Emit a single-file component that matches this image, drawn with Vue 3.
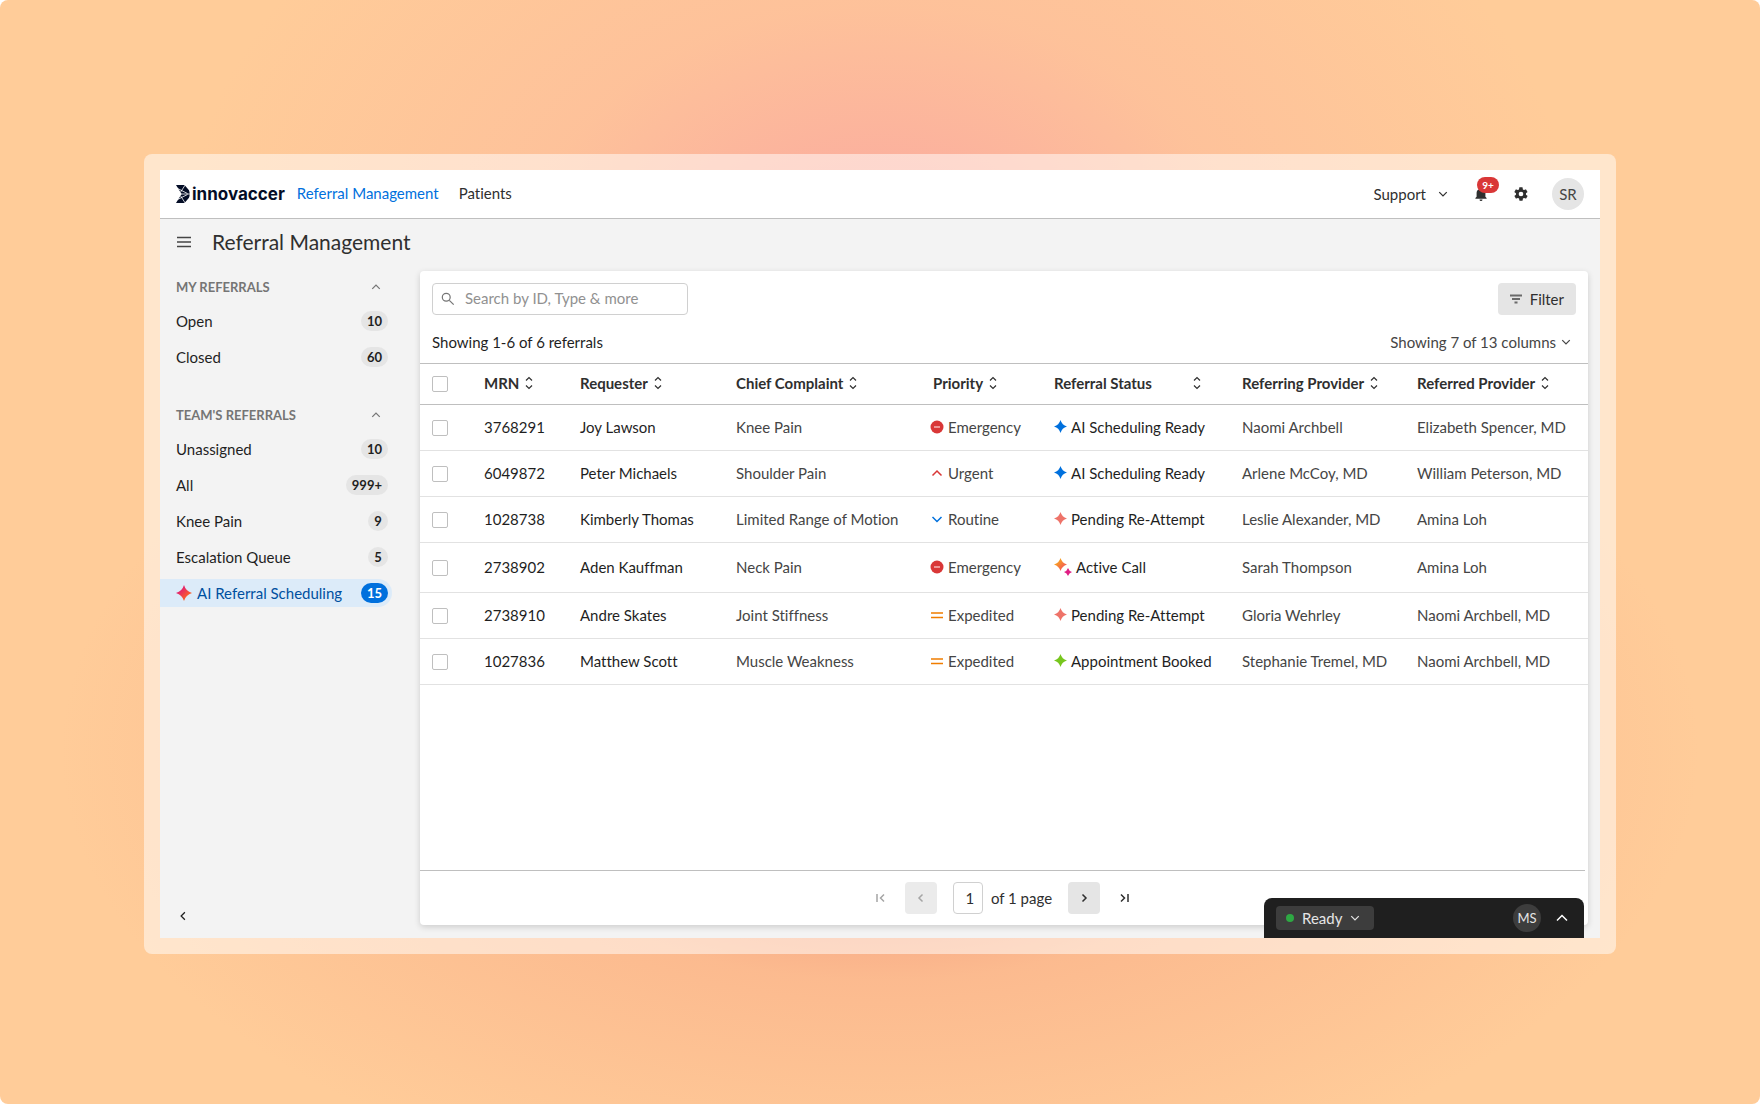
<template>
  <div class="page">
    <div class="frame">
      <div class="window">
        <header class="topbar">
          <a href="#" class="brand" aria-label="innovaccer">
            <svg class="brand-mark" viewBox="0 0 14 18" aria-hidden="true">
              <path d="M0 0h8.500L13 5.200Q14.400 9 13 12.800L8.500 18H0l5.600-9z" />
              <path class="cut" d="M9.200 0L4.400 7.400M9.200 18L4.400 10.600M4 9h10M1 3.200l10.500 5.300M1 14.800l10.500-5.300" />
            </svg>
            <span>innovaccer</span>
          </a>
          <nav class="topnav">
            <a href="#" class="current">Referral Management</a>
            <a href="#">Patients</a>
          </nav>
          <div class="topbar-actions">
            <button class="support">
              Support
              <svg class="chevron" viewBox="0 0 8 8"><path d="M1 2.500l3 3 3-3" /></svg>
            </button>
            <button class="bell" aria-label="Notifications">
              <svg viewBox="0 0 16 16">
                <path d="M8 1.500a1 1 0 0 0-1 1v.4A4 4 0 0 0 3.600 6.800v4L2.400 12v.8h11.200V12l-1.200-1.200v-4A4 4 0 0 0 9 2.900v-.4a1 1 0 0 0-1-1zM6.500 13.500a1.500 1.500 0 0 0 3 0z" />
              </svg>
              <span class="bell-count">9+</span>
            </button>
            <button class="gear" aria-label="Settings">
              <svg viewBox="0 0 24 24">
                <path d="M19.400 13c0-.3.100-.6.100-1s0-.7-.1-1l2.100-1.600c.2-.2.200-.4.100-.6l-2-3.500c-.1-.2-.4-.3-.6-.2l-2.500 1c-.5-.4-1.100-.7-1.700-1l-.4-2.600c0-.2-.2-.5-.5-.5h-4c-.3 0-.5.200-.5.500L9 5.100c-.6.300-1.200.6-1.700 1l-2.500-1c-.2-.1-.5 0-.6.200l-2 3.500c-.1.200-.1.500.1.600L4.500 11c0 .3-.1.600-.1 1s0 .7.100 1l-2.100 1.600c-.2.200-.2.400-.1.600l2 3.500c.1.200.4.300.6.200l2.500-1c.5.400 1.100.7 1.700 1l.4 2.600c0 .3.200.5.500.5h4c.3 0 .5-.2.500-.5l.4-2.600c.6-.3 1.200-.6 1.700-1l2.500 1c.2.100.5 0 .6-.2l2-3.500c.1-.2.100-.5-.1-.6zM12 15.500a3.500 3.500 0 1 1 0-7 3.500 3.500 0 0 1 0 7z" />
              </svg>
            </button>
            <button class="avatar">SR</button>
          </div>
        </header>

        <div class="title-row">
          <button class="menu-btn" aria-label="Menu">
            <svg viewBox="0 0 16 16"><path d="M1 3.500h14M1 8h14M1 12.500h14" /></svg>
          </button>
          <h1>Referral Management</h1>
        </div>

        <div class="body">
          <aside class="sidebar">
            <section v-for="group in groups" :key="group.title" class="side-group">
              <button class="side-heading">
                {{ group.title }}
                <svg class="chevron" viewBox="0 0 8 8"><path d="M1 5.500l3-3 3 3" /></svg>
              </button>
              <a
                v-for="item in group.items"
                :key="item.label"
                href="#"
                class="side-item"
                :class="{ active: item.active }"
              >
                <svg v-if="item.active" class="side-star" viewBox="0 0 16 16">
                  <defs>
                    <linearGradient id="side-star-fill" x1="0" y1="0" x2="1" y2="1">
                      <stop offset="0.3" stop-color="#e3256b" />
                      <stop offset="0.8" stop-color="#ff6a1f" />
                    </linearGradient>
                  </defs>
                  <path :d="starPath" fill="url(#side-star-fill)" />
                </svg>
                <span class="side-label">{{ item.label }}</span>
                <span class="pill">{{ item.count }}</span>
              </a>
            </section>
            <button class="collapse" aria-label="Collapse sidebar">
              <svg class="chevron" viewBox="0 0 8 8"><path d="M5.500 1l-3 3 3 3" /></svg>
            </button>
          </aside>

          <main class="panel">
            <div class="toolbar">
              <label class="search">
                <svg viewBox="0 0 16 16"><circle cx="6" cy="6" r="4.500" /><path d="M9.500 9.500l5 5" /></svg>
                <input v-model="query" type="text" placeholder="Search by ID, Type &amp; more" aria-label="Search referrals" />
              </label>
              <button class="filter">
                <svg viewBox="0 0 12 10"><path d="M0 1.500h12M2 5h8M4.500 8.500h3" /></svg>
                Filter
              </button>
            </div>
            <div class="summary">
              <span class="summary-count">Showing 1-6 of 6 referrals</span>
              <button class="columns">
                Showing 7 of 13 columns
                <svg class="chevron" viewBox="0 0 8 8"><path d="M1 2.500l3 3 3-3" /></svg>
              </button>
            </div>

            <table>
              <colgroup>
                <col class="c-check" />
                <col class="c-mrn" />
                <col class="c-requester" />
                <col class="c-complaint" />
                <col class="c-priority" />
                <col class="c-status" />
                <col class="c-referring" />
                <col class="c-referred" />
              </colgroup>
              <thead>
                <tr>
                  <th class="check"><input type="checkbox" aria-label="Select all" /></th>
                  <th v-for="col in columns" :key="col.label" :class="col.cls">
                    <button class="sort">
                      {{ col.label }}
                      <svg viewBox="0 0 8 14"><path d="M1 4.500l3-3 3 3M1 9.500l3 3 3-3" /></svg>
                    </button>
                  </th>
                </tr>
              </thead>
              <tbody>
                <tr v-for="row in rows" :key="row.mrn" :class="{ tall: row.status === 'Active Call' }">
                  <td class="check"><input type="checkbox" :aria-label="'Select ' + row.mrn" /></td>
                  <td class="strong">{{ row.mrn }}</td>
                  <td class="strong">{{ row.requester }}</td>
                  <td>{{ row.complaint }}</td>
                  <td>
                    <span class="with-icon">
                      <svg v-if="row.priority === 'Emergency'" class="p-icon" viewBox="0 0 14 14">
                        <circle cx="7" cy="7" r="6.500" fill="#d93737" />
                        <path d="M4 7h6" stroke="#f3b7b7" stroke-width="1.500" />
                      </svg>
                      <svg v-else-if="row.priority === 'Urgent'" class="p-icon line" viewBox="0 0 14 14">
                        <path d="M2.500 9.500L7 5l4.500 4.500" stroke="#d93737" />
                      </svg>
                      <svg v-else-if="row.priority === 'Routine'" class="p-icon line" viewBox="0 0 14 14">
                        <path d="M2.500 5L7 9.500 11.500 5" stroke="#0070dd" />
                      </svg>
                      <svg v-else class="p-icon line" viewBox="0 0 14 14">
                        <path d="M1 5h12M1 9.500h12" stroke="#f07d00" />
                      </svg>
                      {{ row.priority }}
                    </span>
                  </td>
                  <td class="strong">
                    <span class="with-icon">
                      <svg v-if="row.status === 'Active Call'" class="call-icon" viewBox="0 0 18 18">
                        <defs>
                          <linearGradient id="call-fill" x1="0" y1="0" x2="1" y2="1">
                            <stop offset="0.200" stop-color="#f7a81b" />
                            <stop offset="0.800" stop-color="#f4565a" />
                          </linearGradient>
                        </defs>
                        <path d="M6.500 0Q8 5 13 6.500 8 8 6.500 13 5 8 0 6.500 5 5 6.500 0z" fill="url(#call-fill)" />
                        <path d="M14 10Q15 13 18 14 15 15 14 18 13 15 10 14 13 13 14 10z" fill="#e01e84" />
                      </svg>
                      <svg v-else class="s-icon" :class="statusClass[row.status]" viewBox="0 0 16 16">
                        <path :d="starPath" />
                      </svg>
                      {{ row.status }}
                    </span>
                  </td>
                  <td>{{ row.referring }}</td>
                  <td>{{ row.referred }}</td>
                </tr>
              </tbody>
            </table>

            <footer class="pager">
              <button class="pg muted" aria-label="First page">
                <svg viewBox="0 0 10 10"><path d="M1 1v8M8 1.500L4.500 5 8 8.500" /></svg>
              </button>
              <button class="pg boxed muted" aria-label="Previous page">
                <svg viewBox="0 0 10 10"><path d="M6.500 1.500L3 5l3.500 3.500" /></svg>
              </button>
              <label class="page-of">
                <input v-model="page" type="text" />
                of 1 page
              </label>
              <button class="pg boxed" aria-label="Next page">
                <svg viewBox="0 0 10 10"><path d="M3.500 1.500L7 5 3.500 8.500" /></svg>
              </button>
              <button class="pg" aria-label="Last page">
                <svg viewBox="0 0 10 10"><path d="M9 1v8M2 1.500L5.500 5 2 8.500" /></svg>
              </button>
            </footer>
          </main>
        </div>

        <div class="dock">
          <button class="ready">
            <span class="dot"></span>
            Ready
            <svg class="chevron" viewBox="0 0 8 8"><path d="M1 2.500l3 3 3-3" /></svg>
          </button>
          <span class="dock-avatar">MS</span>
          <button class="dock-toggle" aria-label="Expand">
            <svg viewBox="0 0 12 12"><path d="M1 8.500l5-5 5 5" /></svg>
          </button>
        </div>
      </div>
    </div>
  </div>
</template>

<script setup>
import { ref } from 'vue'

const query = ref('')
const page = ref('1')

const starPath = 'M8 0Q9.800 6.200 16 8 9.800 9.800 8 16 6.200 9.800 0 8 6.200 6.200 8 0z'

const groups = [
  {
    title: 'MY REFERRALS',
    items: [
      { label: 'Open', count: '10' },
      { label: 'Closed', count: '60' },
    ],
  },
  {
    title: "TEAM'S REFERRALS",
    items: [
      { label: 'Unassigned', count: '10' },
      { label: 'All', count: '999+' },
      { label: 'Knee Pain', count: '9' },
      { label: 'Escalation Queue', count: '5' },
      { label: 'AI Referral Scheduling', count: '15', active: true },
    ],
  },
]

const columns = [
  { label: 'MRN' },
  { label: 'Requester' },
  { label: 'Chief Complaint' },
  { label: 'Priority', cls: 'indent' },
  { label: 'Referral Status', cls: 'wide' },
  { label: 'Referring Provider' },
  { label: 'Referred Provider' },
]

const statusClass = {
  'AI Scheduling Ready': 'blue',
  'Pending Re-Attempt': 'coral',
  'Appointment Booked': 'green',
}

const rows = [
  { mrn: '3768291', requester: 'Joy Lawson', complaint: 'Knee Pain', priority: 'Emergency', status: 'AI Scheduling Ready', referring: 'Naomi Archbell', referred: 'Elizabeth Spencer, MD' },
  { mrn: '6049872', requester: 'Peter Michaels', complaint: 'Shoulder Pain', priority: 'Urgent', status: 'AI Scheduling Ready', referring: 'Arlene McCoy, MD', referred: 'William Peterson, MD' },
  { mrn: '1028738', requester: 'Kimberly Thomas', complaint: 'Limited Range of Motion', priority: 'Routine', status: 'Pending Re-Attempt', referring: 'Leslie Alexander, MD', referred: 'Amina Loh' },
  { mrn: '2738902', requester: 'Aden Kauffman', complaint: 'Neck Pain', priority: 'Emergency', status: 'Active Call', referring: 'Sarah Thompson', referred: 'Amina Loh' },
  { mrn: '2738910', requester: 'Andre Skates', complaint: 'Joint Stiffness', priority: 'Expedited', status: 'Pending Re-Attempt', referring: 'Gloria Wehrley', referred: 'Naomi Archbell, MD' },
  { mrn: '1027836', requester: 'Matthew Scott', complaint: 'Muscle Weakness', priority: 'Expedited', status: 'Appointment Booked', referring: 'Stephanie Tremel, MD', referred: 'Naomi Archbell, MD' },
]
</script>

<style>
body {
  margin: 0;
  background: #fff;
}
</style>

<style scoped>
.page,
.page * {
  box-sizing: border-box;
}
.page {
  min-height: 100vh;
  display: flex;
  padding: 154px 144px 150px;
  border-radius: 8px;
  background:
    radial-gradient(ellipse 700px 520px at 50% 24%, rgba(248, 150, 162, 0.7), rgba(251, 174, 156, 0.35) 50%, rgba(255, 204, 153, 0)),
    radial-gradient(ellipse 820px 460px at 50% 68%, rgba(232, 116, 104, 0.85), rgba(247, 160, 128, 0.4) 50%, rgba(255, 204, 153, 0)),
    #ffcc99;
  font-family: Lato, 'Nunito Sans', sans-serif;
  font-size: 15px;
  line-height: 20px;
  font-variant-ligatures: none;
  color: #2f2f2f;
}
button,
input {
  font: inherit;
  color: inherit;
}
button {
  padding: 0;
  border: 0;
  background: none;
  cursor: pointer;
}
a {
  color: inherit;
  text-decoration: none;
}
svg {
  flex: none;
}

.frame {
  flex: 1;
  display: flex;
  padding: 16px;
  border-radius: 8px;
  background: rgba(255, 255, 255, 0.5);
}
.window {
  position: relative;
  flex: 1;
  display: flex;
  flex-direction: column;
  background: #f3f3f3;
}
.chevron {
  width: 10px;
  height: 10px;
  fill: none;
  stroke: currentColor;
}

/* Barra superior */
.topbar {
  display: flex;
  align-items: center;
  height: 49px;
  padding: 0 16px;
  background: #fff;
  border-bottom: 1px solid #bfbfbf;
}
.brand {
  display: flex;
  align-items: center;
  gap: 2px;
  font-family: Inter, sans-serif;
  font-size: 17px;
  font-weight: 700;
  color: #040d26;
}
.brand-mark {
  width: 14px;
  height: 18px;
  fill: #040d26;
}
.cut {
  fill: none;
  stroke: #fff;
  stroke-width: 0.8;
}
.topnav {
  display: flex;
  gap: 20px;
  margin-left: 12px;
  padding-bottom: 2px;
}
.topnav .current {
  color: #0070dd;
}
.topbar-actions {
  display: flex;
  align-items: center;
  margin-left: auto;
}
.support {
  display: flex;
  align-items: center;
  gap: 12px;
}
.bell {
  position: relative;
  display: flex;
  margin-left: 25px;
}
.bell svg,
.gear svg {
  width: 16px;
  height: 16px;
  fill: #2f2f2f;
}
.bell-count {
  position: absolute;
  left: 4px;
  bottom: 9px;
  width: 22px;
  height: 16px;
  border-radius: 8px;
  background: #d93737;
  color: #fff;
  font-size: 10px;
  font-weight: 700;
  line-height: 16px;
}
.gear {
  display: flex;
  margin-left: 24px;
}
.avatar {
  width: 32px;
  height: 32px;
  margin-left: 23px;
  border-radius: 50%;
  background: #e5e5e5;
  color: #454545;
}

.title-row {
  display: flex;
  align-items: center;
  gap: 20px;
  height: 48px;
  padding: 0 16px 2px;
}
.menu-btn {
  display: flex;
}
.menu-btn svg {
  width: 16px;
  height: 16px;
  stroke: #454545;
  stroke-width: 1.6;
}
h1 {
  margin: 0;
  font-size: 21px;
  font-weight: 400;
  line-height: 28px;
}

.body {
  flex: 1;
  display: flex;
  padding: 4px 12px 13px 0;
}

/* Menú lateral */
.sidebar {
  flex: none;
  width: 260px;
  display: flex;
  flex-direction: column;
  color: #1f1f1f;
}
.side-group {
  display: flex;
  flex-direction: column;
  gap: 8px;
  margin-bottom: 28px;
}
.side-heading {
  display: flex;
  align-items: center;
  justify-content: space-between;
  height: 24px;
  margin-top: 4px;
  margin-right: 39px;
  padding-left: 16px;
  font-size: 13px;
  font-weight: 700;
  color: #757575;
}
.side-item {
  display: flex;
  align-items: center;
  height: 28px;
  margin-right: 28px;
  padding: 0 4px 0 16px;
  border-radius: 0 14px 14px 0;
}
.side-item.active {
  background: #dcebf9;
  color: #0050a0;
}
.side-star {
  width: 16px;
  height: 16px;
  margin-right: 5px;
}
.side-label {
  flex: 1;
}
.pill {
  min-width: 20px;
  height: 20px;
  padding: 0 6px;
  border-radius: 10px;
  background: #e5e5e5;
  font-size: 13px;
  font-weight: 700;
  text-align: center;
}
.active .pill {
  background: #0070dd;
  color: #fff;
}
.collapse {
  display: flex;
  align-self: flex-start;
  margin: auto 18px 4px;
}

/* Panel de tabla */
.panel {
  flex: 1;
  min-width: 0;
  display: flex;
  flex-direction: column;
  border-radius: 4px;
  background: #fff;
  box-shadow: 0 2px 6px rgba(0, 0, 0, 0.16);
}
.toolbar {
  display: flex;
  justify-content: space-between;
  padding: 12px 12px 0;
}
.search {
  display: flex;
  align-items: center;
  gap: 10px;
  width: 256px;
  height: 32px;
  padding: 0 8px;
  border: 1px solid #d0d0d0;
  border-radius: 4px;
}
.search svg {
  width: 14px;
  height: 14px;
  fill: none;
  stroke: #757575;
  stroke-width: 1.4;
}
.search input {
  flex: 1;
  min-width: 0;
  padding: 0 0 2px;
  border: 0;
  outline: 0;
  background: none;
}
.search input::placeholder {
  color: #919191;
}
.filter {
  display: flex;
  align-items: center;
  gap: 8px;
  height: 32px;
  padding: 0 12px;
  border-radius: 4px;
  background: #e5e5e5;
}
.filter svg {
  width: 12px;
  height: 10px;
  stroke: #6a6a6a;
  stroke-width: 2;
}
.summary {
  display: flex;
  align-items: center;
  justify-content: space-between;
  padding: 17px 17px 11px 12px;
}
.summary-count {
  color: #1f1f1f;
}
.columns {
  display: flex;
  align-items: center;
  gap: 5px;
  color: #454545;
}

table {
  width: 100%;
  table-layout: fixed;
  border-collapse: collapse;
}
.c-check { width: 64px; }
.c-mrn { width: 96px; }
.c-requester { width: 156px; }
.c-complaint { width: 194px; }
.c-priority { width: 124px; }
.c-status { width: 188px; }
.c-referring { width: 175px; }
.c-referred { width: 171px; }
th,
td {
  padding: 0 0 2px;
  text-align: left;
  white-space: nowrap;
}
th {
  height: 41px;
  border-top: 1px solid #bfbfbf;
  border-bottom: 1px solid #bfbfbf;
}
td {
  height: 46px;
  border-bottom: 1px solid #e2e2e2;
  color: #454545;
}
.tall td {
  height: 50px;
}
.check {
  padding: 0 0 0 12px;
}
.check input {
  appearance: none;
  display: block;
  width: 16px;
  height: 16px;
  margin: 0;
  border: 1px solid #bfbfbf;
  border-radius: 2px;
  background: #fff;
}
.strong {
  color: #1f1f1f;
}
.sort {
  display: flex;
  align-items: center;
  gap: 6px;
  font-weight: 700;
}
.sort svg {
  width: 8px;
  height: 14px;
  fill: none;
  stroke: currentColor;
  stroke-width: 1.2;
}
.indent {
  padding-left: 3px;
}
.wide .sort {
  width: 147px;
  justify-content: space-between;
}
.with-icon {
  display: flex;
  align-items: center;
  gap: 4px;
}
.p-icon {
  width: 14px;
  height: 14px;
}
.line {
  fill: none;
  stroke-width: 1.5;
}
.s-icon {
  width: 13px;
  height: 13px;
}
.call-icon {
  width: 18px;
  height: 18px;
}
.blue { fill: #0070dd; }
.coral { fill: #ee7369; }
.green { fill: #77c61e; }

.pager {
  display: flex;
  align-items: center;
  justify-content: center;
  height: 55px;
  margin: auto 3px 0 0;
  border-top: 1px solid #bfbfbf;
}
.pg {
  display: flex;
  align-items: center;
  justify-content: center;
  width: 32px;
  height: 32px;
  margin: 0 4px;
  border-radius: 4px;
}
.pg svg {
  width: 10px;
  height: 10px;
  fill: none;
  stroke: currentColor;
  stroke-width: 1.5;
}
.boxed {
  background: #e5e5e5;
}
.muted {
  color: #a5a5a5;
}
.boxed.muted {
  background: #ebebeb;
}
.page-of {
  display: flex;
  align-items: center;
  gap: 8px;
  margin: 0 12px;
}
.page-of input {
  width: 30px;
  height: 32px;
  padding: 0 4px 0 8px;
  border: 1px solid #d0d0d0;
  border-radius: 4px;
  text-align: center;
}

/* Barra de llamadas */
.dock {
  position: absolute;
  right: 16px;
  bottom: 0;
  display: flex;
  align-items: center;
  width: 320px;
  height: 40px;
  padding: 0 16px 0 12px;
  border-radius: 8px 8px 0 0;
  background: #1f1f1f;
  color: #e5e5e5;
}
.ready {
  display: flex;
  align-items: center;
  gap: 8px;
  height: 24px;
  padding: 0 14px 0 10px;
  border-radius: 4px;
  background: #3d3d3d;
}
.dot {
  width: 8px;
  height: 8px;
  border-radius: 50%;
  background: #2ea843;
}
.dock-avatar {
  width: 28px;
  height: 28px;
  margin-left: auto;
  border-radius: 50%;
  background: #3d3d3d;
  font-size: 13px;
  line-height: 28px;
  text-align: center;
}
.dock-toggle {
  display: flex;
  margin-left: 15px;
}
.dock-toggle svg {
  width: 12px;
  height: 12px;
  fill: none;
  stroke: #fff;
  stroke-width: 1.5;
}
</style>
